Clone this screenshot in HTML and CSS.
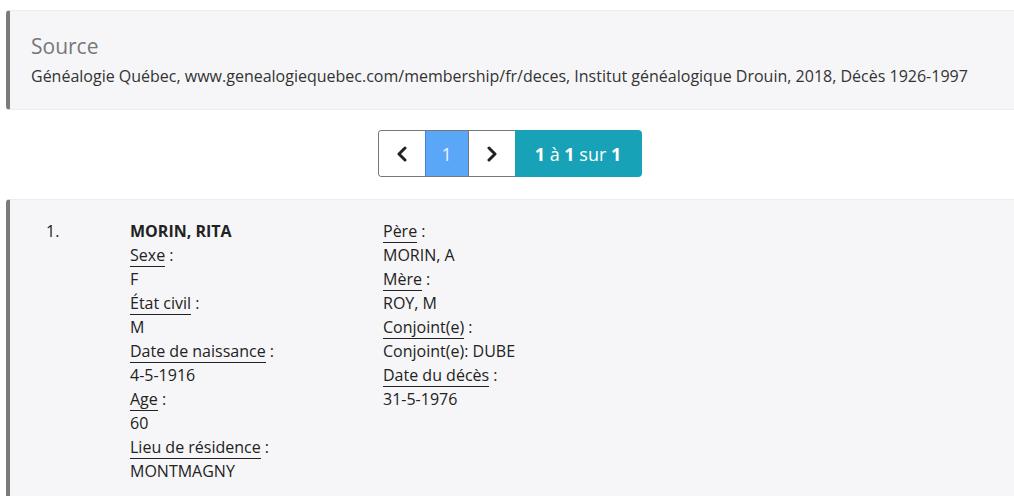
FILE: index.html
```html
<!DOCTYPE html>
<html lang="fr">
<head>
  <meta charset="UTF-8" />
  <meta name="viewport" content="width=device-width, initial-scale=1.0"/>
  <title>Décès 1926-1997</title>
  <link rel="stylesheet" href="styles.css">
</head>
<body>
  <div class="page">
    <!-- Source -->
    <div class="gq-box gq-source">
      <h3>Source</h3>
      <p>Généalogie Québec, www.genealogiequebec.com/membership/fr/deces, Institut généalogique Drouin, 2018, Décès 1926-1997</p>
    </div>

    <!-- Pagination -->
    <div class="gq-pager">
      <div class="gq-pages">
        <a class="gq-page gq-arrow" href="#">
          <svg width="14" height="16" viewBox="0 0 14 16"><polyline points="10,2 4,8 10,14" fill="none" stroke="#222" stroke-width="3" stroke-linecap="round" stroke-linejoin="round"/></svg>
        </a>
        <span class="gq-page gq-current">1</span>
        <a class="gq-page gq-arrow" href="#">
          <svg width="14" height="16" viewBox="0 0 14 16"><polyline points="4,2 10,8 4,14" fill="none" stroke="#222" stroke-width="3" stroke-linecap="round" stroke-linejoin="round"/></svg>
        </a>
      </div>
      <div class="gq-count"><span><b>1</b> à <b>1</b> sur <b>1</b></span></div>
    </div>

    <!-- Result -->
    <div class="gq-box gq-record">
      <div class="gq-num">1.</div>
      <div class="gq-col">
        <div class="gq-name">MORIN, RITA</div>
        <div><span class="gq-label">Sexe</span> :</div>
        <div>F</div>
        <div><span class="gq-label">État civil</span> :</div>
        <div>M</div>
        <div><span class="gq-label">Date de naissance</span> :</div>
        <div>4-5-1916</div>
        <div><span class="gq-label">Age</span> :</div>
        <div>60</div>
        <div><span class="gq-label">Lieu de résidence</span> :</div>
        <div>MONTMAGNY</div>
      </div>
      <div class="gq-col">
        <div><span class="gq-label">Père</span> :</div>
        <div>MORIN, A</div>
        <div><span class="gq-label">Mère</span> :</div>
        <div>ROY, M</div>
        <div><span class="gq-label">Conjoint(e)</span> :</div>
        <div>Conjoint(e): DUBE</div>
        <div><span class="gq-label">Date du décès</span> :</div>
        <div>31-5-1976</div>
      </div>
    </div>
  </div>
</body>
</html>
```

FILE: styles.css
```css
html, body {
  margin: 0;
  overflow: hidden;
}

body {
  font-family: "Open Sans", Arial, sans-serif;
  font-size: 16px;
  line-height: 24px;
  color: #222;
  background: #fff;
}

.page {
  padding: 10px 0 0 6px;
}

.gq-box {
  background: #f6f6f8;
  border-left: 4px solid #7b7b7b;
  border-top: 1px solid #ececef;
  border-bottom: 1px solid #ececef;
  border-radius: 4px 0 0 4px;
}

.gq-source {
  padding: 20px 0 21px 21px;
}

.gq-source h3 {
  margin: 0 0 3px;
  font-size: 21px;
  line-height: 30px;
  font-weight: 400;
  color: #777;
}

.gq-source p {
  margin: 0;
  color: #333;
}

.gq-pager {
  display: flex;
  justify-content: center;
  margin: 20px 0 22px;
  height: 47px;
}

.gq-pages {
  display: flex;
  border: 1px solid #777;
  border-right: none;
  border-radius: 4px 0 0 4px;
  overflow: hidden;
}

.gq-page {
  display: flex;
  align-items: center;
  justify-content: center;
  width: 46px;
  text-decoration: none;
  font-size: 18px;
}

.gq-arrow {
  background: #fff;
}

.gq-current {
  width: 42px;
  background: #5aa7f8;
  color: #eaf3fe;
  border-left: 1px solid #3f84d6;
  border-right: 1px solid #777;
}

.gq-count {
  display: flex;
  align-items: center;
  padding: 0 21px 0 20px;
  background: #17a2b8;
  color: #fff;
  font-size: 18px;
  border-radius: 0 4px 4px 0;
}

.gq-count b {
  font-weight: 700;
}

.gq-record {
  display: flex;
  padding: 19px 0 40px 36px;
  border-bottom: none;
}

.gq-num {
  width: 84px;
}

.gq-col {
  width: 253px;
}

.gq-name {
  font-weight: 700;
}

.gq-label {
  border-bottom: 1px solid #222;
}
```
